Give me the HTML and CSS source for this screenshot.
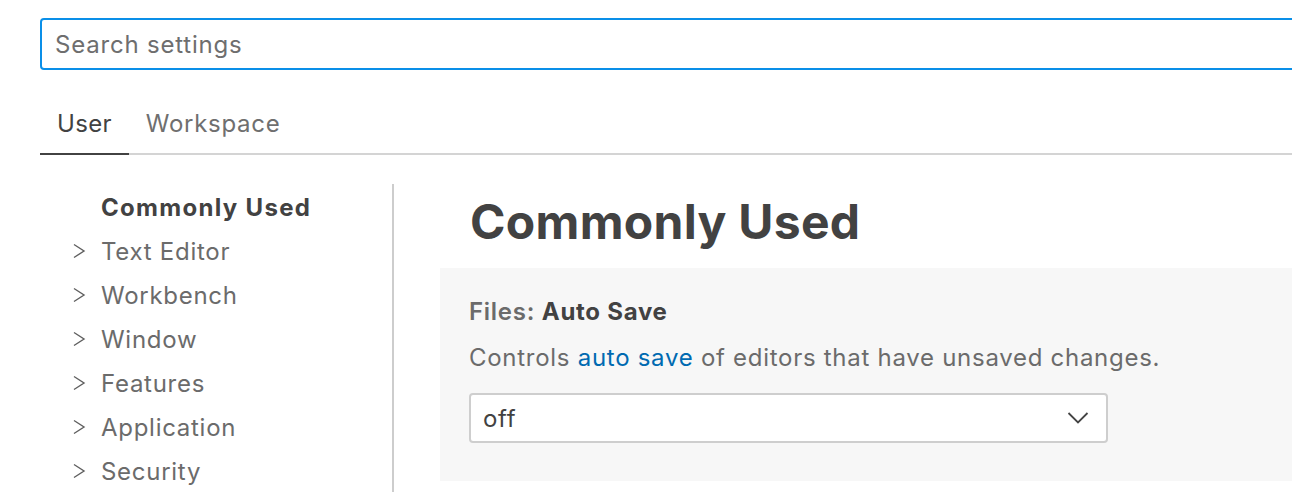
FILE: index.html
```html
<!DOCTYPE html>
<html>
<head>
<meta charset="utf-8">
<link rel="stylesheet" href="styles.css">
</head>
<body>
<div class="page">
  <div class="search"><span class="placeholder">Search settings</span></div>
  <div class="tabs">
    <div class="tab active">User</div>
    <div class="tab">Workspace</div>
  </div>
  <div class="body">
    <nav class="toc">
      <div class="toc-item selected"><span class="chev"></span><span>Commonly Used</span></div>
      <div class="toc-item"><span class="chev"><svg width="13" height="16" viewBox="0 0 13 16"><path d="M1 1.5 L11 8 L1 14.5" fill="none" stroke="#5f5f5f" stroke-width="1.4"/></svg></span><span>Text Editor</span></div>
      <div class="toc-item"><span class="chev"><svg width="13" height="16" viewBox="0 0 13 16"><path d="M1 1.5 L11 8 L1 14.5" fill="none" stroke="#5f5f5f" stroke-width="1.4"/></svg></span><span>Workbench</span></div>
      <div class="toc-item"><span class="chev"><svg width="13" height="16" viewBox="0 0 13 16"><path d="M1 1.5 L11 8 L1 14.5" fill="none" stroke="#5f5f5f" stroke-width="1.4"/></svg></span><span>Window</span></div>
      <div class="toc-item"><span class="chev"><svg width="13" height="16" viewBox="0 0 13 16"><path d="M1 1.5 L11 8 L1 14.5" fill="none" stroke="#5f5f5f" stroke-width="1.4"/></svg></span><span>Features</span></div>
      <div class="toc-item"><span class="chev"><svg width="13" height="16" viewBox="0 0 13 16"><path d="M1 1.5 L11 8 L1 14.5" fill="none" stroke="#5f5f5f" stroke-width="1.4"/></svg></span><span>Application</span></div>
      <div class="toc-item"><span class="chev"><svg width="13" height="16" viewBox="0 0 13 16"><path d="M1 1.5 L11 8 L1 14.5" fill="none" stroke="#5f5f5f" stroke-width="1.4"/></svg></span><span>Security</span></div>
    </nav>
    <div class="divider"></div>
    <main class="main">
      <h1 class="title">Commonly Used</h1>
      <section class="setting">
        <div class="setting-label"><span class="category">Files: </span><span class="name">Auto Save</span></div>
        <div class="setting-desc">Controls <span class="link">auto save</span> of editors that have unsaved changes.</div>
        <div class="select">
          <span>off</span>
          <svg width="22" height="14" viewBox="0 0 22 14"><path d="M1.5 2 L11 11.5 L20.5 2" fill="none" stroke="#444" stroke-width="1.8"/></svg>
        </div>
      </section>
    </main>
  </div>
</div>
</body>
</html>
```

FILE: styles.css
```css
html, body {
  margin: 0;
  padding: 0;
  background: #ffffff;
  overflow: hidden;
}
body {
  font-family: "Inter", "Liberation Sans", sans-serif;
  color: #424242;
  width: 1292px;
  height: 492px;
  font-size: 24px;
  letter-spacing: 0.72px;
}
.page {
  width: 1340px;
  padding-left: 40px;
  box-sizing: border-box;
}
.search {
  margin-top: 18px;
  height: 52px;
  box-sizing: border-box;
  border: 2px solid #0a8fe8;
  border-radius: 4px;
  display: flex;
  align-items: center;
  padding-left: 13px;
  color: #6e6e6e;
  letter-spacing: 0.8px;
}
.tabs {
  display: flex;
  margin-top: 30px;
  border-bottom: 2px solid #d4d4d4;
  height: 55px;
  box-sizing: border-box;
}
.tab {
  padding: 2px 17px 0 17px;
  line-height: 44px;
  color: #6f6f6f;
  margin-bottom: -2px;
  height: 55px;
  box-sizing: border-box;
}
.tab.active {
  color: #424242;
  border-bottom: 2px solid #424242;
  letter-spacing: 0.3px;
}
.body {
  display: flex;
  margin-top: 29px;
}
.toc {
  width: 352px;
  padding-top: 1px;
}
.toc-item {
  display: flex;
  align-items: center;
  height: 44px;
  color: #6b6b6b;
}
.toc-item.selected {
  font-weight: 700;
  color: #424242;
  letter-spacing: 1.3px;
}
.chev {
  width: 28px;
  margin-left: 33px;
  display: flex;
  align-items: center;
}
.divider {
  width: 2px;
  background: #cdcdcd;
  height: 320px;
}
.main {
  flex: 1;
  padding-left: 46px;
}
.title {
  margin: 0;
  font-size: 48px;
  font-weight: 700;
  letter-spacing: 0.3px;
  color: #424242;
  padding-left: 30px;
  height: 84px;
  line-height: 76px;
}
.setting {
  background: #f7f7f7;
  padding: 29px 29px 38px 29px;
}
.setting-label {
  font-weight: 600;
  line-height: 30px;
}
.category { color: #6b6b6b; }
.name { color: #424242; font-weight: 700; }
.setting-desc {
  margin-top: 16px;
  line-height: 30px;
  color: #6b6b6b;
}
.link { color: #006ab1; }
.select {
  margin-top: 20px;
  width: 639px;
  height: 50px;
  box-sizing: border-box;
  border: 2px solid #cecece;
  border-radius: 4px;
  background: #ffffff;
  display: flex;
  align-items: center;
  justify-content: space-between;
  padding: 0 17px 0 12px;
  color: #424242;
}
```
